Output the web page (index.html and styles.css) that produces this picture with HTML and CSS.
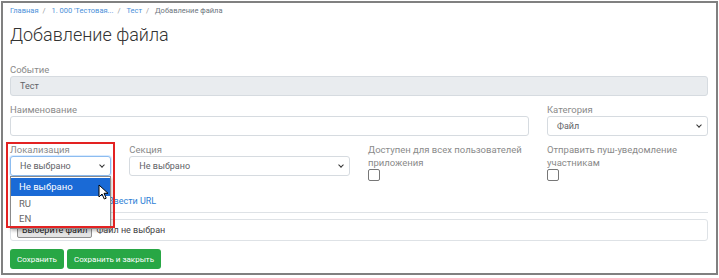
FILE: index.html
```html
<!DOCTYPE html>
<html lang="ru">
<head>
  <meta charset="UTF-8">
  <title>Добавление файла</title>
  <link rel="stylesheet" href="styles.css">
</head>
<body>
  <div class="frame">
    <div class="breadcrumb">
      <a href="#">Главная</a><span class="sep">/</span>
      <a href="#">1. 000 'Тестовая...</a><span class="sep">/</span>
      <a href="#">Тест</a><span class="sep">/</span>
      <span class="current">Добавление файла</span>
    </div>

    <h1>Добавление файла</h1>

    <div class="field">
      <label>Событие</label>
      <div class="input disabled">Тест</div>
    </div>

    <div class="row">
      <div class="field col-9">
        <label>Наименование</label>
        <div class="input"></div>
      </div>
      <div class="field col-3">
        <label>Категория</label>
        <div class="input select">Файл<span class="chevron"></span></div>
      </div>
    </div>

    <div class="row">
      <div class="field col-2 locale">
        <label>Локализация</label>
        <div class="input select focused">Не выбрано<span class="chevron"></span></div>
        <ul class="options">
          <li class="selected">Не выбрано</li>
          <li>RU</li>
          <li>EN</li>
        </ul>
        <svg class="cursor" width="11" height="16" viewBox="0 0 11 16">
          <path d="M1 1 L1 13 L4 10 L6.3 15 L8.2 14.2 L6 9.3 L10 9.3 Z" fill="#fff" stroke="#000" stroke-width="1" stroke-linejoin="round"/>
        </svg>
        <div class="highlight"></div>
      </div>
      <div class="field col-4">
        <label>Секция</label>
        <div class="input select">Не выбрано<span class="chevron"></span></div>
      </div>
      <div class="field col-3">
        <label>Доступен для всех пользователей приложения</label>
        <span class="checkbox"></span>
      </div>
      <div class="field col-3">
        <label>Отправить пуш-уведомление участникам</label>
        <span class="checkbox"></span>
      </div>
    </div>

    <div class="tabs">
      <a href="#" class="tab active">Загрузить файл</a>
      <a href="#" class="tab">Ввести URL</a>
    </div>

    <div class="file-box">
      <span class="file-btn">Выберите файл</span>
      <span class="file-name">Файл не выбран</span>
    </div>

    <div class="actions">
      <button class="btn">Сохранить</button>
      <button class="btn">Сохранить и закрыть</button>
    </div>
  </div>
</body>
</html>
```

FILE: styles.css
```css
body {
  margin: 0;
  font-family: Roboto, "Liberation Sans", sans-serif;
  background-color: white;
  color: #495057;
}

.frame {
  box-sizing: border-box;
  width: 717px;
  height: 274px;
  margin: 1px 0 0 1px;
  border: 2px solid #808080;
  padding: 0 8px 0 7px;
}

.breadcrumb {
  padding-top: 2px;
  font-size: 7.5px;
  line-height: 12px;
  color: #6c757d;
}

.breadcrumb a {
  color: #4a90d9;
  text-decoration: none;
}

.breadcrumb .sep {
  margin: 0 4px;
  color: #999;
}

h1 {
  margin: 6px 0 0;
  font-size: 18px;
  line-height: 24px;
  font-weight: 300;
  color: #333;
}

.field {
  position: relative;
}

.field label {
  display: block;
  font-size: 9.5px;
  line-height: 13px;
  color: #8a8a8a;
}

h1 + .field {
  margin-top: 16px;
}

.input {
  box-sizing: border-box;
  height: 20px;
  border: 1px solid #d6dbe0;
  border-radius: 3px;
  padding: 0 9px;
  font-size: 9px;
  line-height: 18px;
  color: #5f6368;
  background-color: white;
}

.input.disabled {
  background-color: #e9ecef;
}

.select {
  position: relative;
}

.select.focused {
  border-color: #8cbcf0;
  box-shadow: 0 0 0 1px rgba(0, 123, 255, 0.15);
}

.chevron {
  position: absolute;
  right: 6px;
  top: 6px;
  width: 3px;
  height: 3px;
  border-right: 1.5px solid #333;
  border-bottom: 1.5px solid #333;
  transform: rotate(45deg);
}

.row {
  display: grid;
  grid-template-columns: repeat(12, 1fr);
  column-gap: 18px;
  margin-top: 7px;
}

.col-2 { grid-column: span 2; }
.col-3 { grid-column: span 3; }
.col-4 { grid-column: span 4; }
.col-9 { grid-column: span 9; }

.checkbox {
  display: block;
  box-sizing: border-box;
  width: 12px;
  height: 12px;
  border: 1px solid #777;
  border-radius: 2px;
}

.options {
  position: absolute;
  left: 0;
  top: 33px;
  box-sizing: border-box;
  width: 101px;
  margin: 0;
  padding: 1px 0 2px;
  list-style: none;
  background-color: white;
  border: 1px solid #8a8a8a;
  box-shadow: 1px 2px 3px rgba(0, 0, 0, 0.25);
  z-index: 2;
}

.options li {
  height: 15px;
  padding: 0 8px;
  font-size: 9.5px;
  line-height: 15px;
  color: #666;
}

.options li.selected {
  height: 18px;
  line-height: 18px;
  background-color: #1a6ad6;
  color: white;
}

.cursor {
  position: absolute;
  left: 88px;
  top: 41px;
  z-index: 3;
}

.highlight {
  position: absolute;
  left: -4px;
  top: -1px;
  width: 105px;
  height: 82px;
  border: 2px solid #e32222;
  z-index: 4;
}

.tabs {
  display: flex;
  margin-top: 9px;
  height: 22px;
  border-bottom: 1px solid #dee2e6;
}

.tab {
  padding: 0 6px;
  font-size: 9px;
  line-height: 22px;
  color: #2f7fd6;
  text-decoration: none;
}

.tab.active {
  width: 78px;
  color: #495057;
  border: 1px solid #dee2e6;
  border-bottom-color: white;
  border-radius: 3px 3px 0 0;
}

.file-box {
  display: flex;
  align-items: center;
  box-sizing: border-box;
  height: 22px;
  margin-top: 6px;
  padding: 0 6px;
  border: 1px solid #dee2e6;
  border-radius: 3px;
  font-size: 9px;
}

.file-btn {
  box-sizing: border-box;
  height: 16px;
  padding: 0 4px;
  line-height: 14px;
  background-color: #e4e4e4;
  border: 1px solid #8f8f8f;
  border-radius: 2px;
  color: #222;
}

.file-name {
  margin-left: 4px;
  color: #444;
}

.actions {
  display: flex;
  gap: 3px;
  margin-top: 8px;
}

.btn {
  height: 20px;
  padding: 0 7px;
  border: none;
  border-radius: 3px;
  background-color: #28a745;
  color: white;
  font-family: inherit;
  font-size: 8px;
  cursor: pointer;
}
```
